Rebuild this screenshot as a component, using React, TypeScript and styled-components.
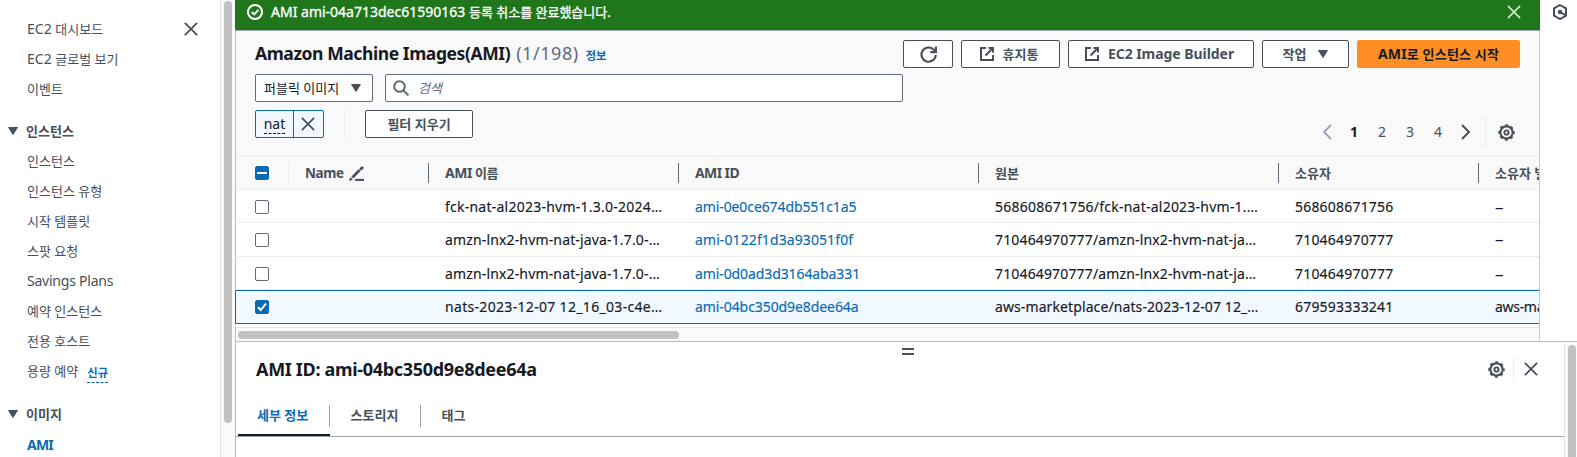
import React from "react";
import styled, { createGlobalStyle, css } from "styled-components";

const GlobalStyle = createGlobalStyle`
  *, *::before, *::after { box-sizing: border-box; }
  body {
    margin: 0;
    background: #fff;
    color: #16191f;
    font-family: "Noto Sans", "Noto Sans CJK KR", sans-serif;
    font-size: 14px;
    line-height: 20px;
    overflow: hidden;
  }
`;

const ink = "#474f5a";
const linkBlue = "#086ab4";
const rule = "#e9ebed";
const edge = "#b6bec0";

const Page = styled.div`
  display: flex;
  width: 1577px;
  height: 457px;
  overflow: hidden;
`;

const Text = styled.span<{ $ls?: number; $size?: number; $weight?: number }>`
  white-space: pre;
  letter-spacing: ${(p) => p.$ls ?? 0}px;
  ${(p) => p.$size && css`font-size: ${p.$size}px;`}
`;

const Ko = styled.span`
  font-size: 13px;
`;

/* Side navigation */
const Sidebar = styled.nav`
  width: 220px;
  padding-top: 14px;
  flex: none;
  color: ${ink};
`;

const NavRow = styled.div<{ $active?: boolean }>`
  display: flex;
  align-items: center;
  height: 30px;
  padding: 0 22px 0 27px;
  white-space: pre;
  ${(p) => p.$active && css`margin-top: 1px; color: ${linkBlue}; font-weight: 700;`}
  > svg { margin-left: auto; }
`;

const NavHeading = styled.div`
  display: flex;
  align-items: center;
  height: 30px;
  margin-top: 12px;
  padding-left: 8px;
  gap: 8px;
  font-size: 13px;
  font-weight: 700;
  & ~ & { margin-top: 13px; }
`;

const NewTag = styled.span`
  margin-left: 9px;
  margin-top: 4px;
  height: 19px;
  line-height: 17px;
  font-size: 11.3px;
  font-weight: 700;
  color: ${linkBlue};
  border-bottom: 1px dashed ${linkBlue};
`;

const SideScroll = styled.div`
  width: 15px;
  flex: none;
  border-left: 1px solid #e4e4e4;
  background: #fafafa;
  padding: 1px 3px;
`;

const Thumb = styled.div<{ $w: number; $h: number }>`
  width: ${(p) => p.$w}px;
  height: ${(p) => p.$h}px;
  border-radius: 4px;
  background: #c1c1c1;
`;

/* Main area */
const Main = styled.div`
  display: flex;
  flex-direction: column;
  width: 1342px;
`;

const Upper = styled.div`
  display: flex;
  height: 341px;
  flex: none;
`;

const Content = styled.div`
  width: 1305px;
  flex: none;
`;

const Panel = styled.div`
  width: 1305px;
  height: 310px;
  overflow: hidden;
  background: #f9f9f9;
  border-right: 1px solid #c3c9ce;
`;

const Tools = styled.div`
  height: 125px;
  padding: 9px 19px 0 19px;
  border-left: 1px solid ${edge};
`;

const Rail = styled.aside`
  flex: 1;
  padding: 4px 0 0 12px;
  color: ${ink};
`;

const Flash = styled.div`
  display: flex;
  align-items: center;
  height: 31px;
  padding: 0 19px 6px 12px;
  color: #fff;
  background: #20771b;
  border-bottom: 1px solid #9ba7b6;
  gap: 8px;
  -webkit-text-stroke: 0.3px #fff;
  > svg:last-child { margin-left: auto; opacity: 0.8; }
`;

const TitleBar = styled.div`
  display: flex;
  align-items: center;
  height: 28px;
`;

const Title = styled.h1`
  margin: 0;
  padding-bottom: 2px;
  font-size: 17.5px;
  font-weight: 700;
  white-space: pre;
`;

const Counter = styled.span`
  margin-left: 6px;
  padding-bottom: 2px;
  font-size: 18px;
  letter-spacing: 0.55px;
  color: #5f6b7a;
`;

const InfoLink = styled.span`
  margin: 3px 0 0 7px;
  font-size: 11.3px;
  font-weight: 700;
  color: ${linkBlue};
`;

const Actions = styled.div`
  display: flex;
  gap: 8px;
  margin-left: auto;
`;

const Button = styled.button<{ $w: number; $primary?: boolean; $external?: boolean; $gap?: number }>`
  display: flex;
  align-items: center;
  justify-content: center;
  gap: ${(p) => p.$gap ?? 8}px;
  width: ${(p) => p.$w}px;
  height: 28px;
  padding: 0 ${(p) => (p.$external ? 4 : 0)}px 0 0;
  border: 1px solid ${ink};
  border-radius: 2px;
  background: #fff;
  color: ${ink};
  font: 700 14px/20px "Noto Sans", "Noto Sans CJK KR", sans-serif;
  white-space: pre;
  ${(p) => p.$primary && css`
    background: #ff8f24;
    border-color: #ff8f24;
    color: #16191f;
  `}
`;

const FilterBar = styled.div`
  display: flex;
  gap: 12px;
  margin-top: 6px;
`;

const Select = styled.div`
  display: flex;
  align-items: center;
  justify-content: space-between;
  width: 118px;
  height: 28px;
  padding: 0 11px 0 8px;
  border: 1px solid #5f6b7a;
  border-radius: 2px;
  background: #fff;
  font-size: 13px;
`;

const Search = styled.div`
  display: flex;
  align-items: center;
  gap: 9px;
  width: 518px;
  height: 28px;
  padding-left: 7px;
  border: 1px solid #5f6b7a;
  border-radius: 2px;
  background: #fff;
  color: #5f6b7a;
  font-size: 13px;
  font-style: italic;
`;

const TokenBar = styled.div`
  display: flex;
  align-items: flex-start;
  margin-top: 8px;
`;

const Token = styled.div`
  display: flex;
  width: 69px;
  height: 28px;
  border: 1px solid ${linkBlue};
  border-radius: 2px;
  background: #f1f8ff;
`;

const TokenLabel = styled.div`
  display: flex;
  align-items: flex-start;
  justify-content: center;
  width: 38px;
  padding-top: 3px;
  border-right: 1px solid ${linkBlue};
  > span { border-bottom: 1px dashed #16191f; height: 20px; }
`;

const TokenClose = styled.div`
  display: flex;
  flex: 1;
  align-items: center;
  justify-content: center;
  padding-right: 2px;
  color: ${ink};
`;

const VLine = styled.div<{ $h: number; $ml: number; $mr: number }>`
  width: 1px;
  height: ${(p) => p.$h}px;
  margin: 0 ${(p) => p.$mr}px 0 ${(p) => p.$ml}px;
  background: ${rule};
`;

const Pager = styled.div`
  display: flex;
  align-items: center;
  height: 28px;
  margin: 8px 5px 0 auto;
  color: ${ink};
`;

const Pages = styled.div`
  display: flex;
  margin: 0 6px 0 5px;
`;

const PageNo = styled.span<{ $on?: boolean }>`
  width: 28px;
  text-align: center;
  ${(p) => p.$on && css`font-weight: 700; color: #16191f;`}
`;

/* Table */
const grid = css`
  display: grid;
  grid-template-columns: 53px 140px 250px 300px 300px 200px 250px;
  width: 1494px;
  border-left: 1px solid ${edge};
`;

const HeadRow = styled.div`
  ${grid}
  height: 34px;
  border-top: 1px solid ${rule};
  border-bottom: 1px solid ${rule};
  color: ${ink};
  font-weight: 700;
`;

const HeadCell = styled.div<{ $last?: boolean }>`
  display: flex;
  align-items: center;
  gap: 5px;
  height: 20px;
  margin-top: 6px;
  padding-left: 16px;
  white-space: pre;
  border-right: ${(p) => (p.$last ? "none" : "1px solid #5f6b7a")};
`;

const CheckCell = styled.div<{ $head?: boolean }>`
  display: flex;
  align-items: center;
  height: 20px;
  margin-top: ${(p) => (p.$head ? 6 : 0)}px;
  padding-left: 19px;
  ${(p) => p.$head && css`border-right: 1px solid ${rule};`}
`;

const Row = styled.div<{ $h: number; $drop?: boolean; $selected?: boolean }>`
  ${grid}
  align-items: center;
  height: ${(p) => p.$h}px;
  padding-top: ${(p) => (p.$drop ? 2 : 0)}px;
  background: #fff;
  border-bottom: 1px solid ${rule};
  ${(p) => p.$selected && css`
    background: #f1f8ff;
    border: 1px solid ${linkBlue};
  `}
`;

const Cell = styled.div<{ $link?: boolean }>`
  padding-left: 16px;
  white-space: pre;
  -webkit-text-stroke: 0.15px currentColor;
  ${(p) => p.$link && css`color: ${linkBlue};`}
`;

const Box = styled.span<{ $on?: boolean }>`
  display: flex;
  align-items: center;
  justify-content: center;
  width: 14px;
  height: 14px;
  border-radius: 2px;
  border: 1px solid ${(p) => (p.$on ? linkBlue : "#5f6b7a")};
  background: ${(p) => (p.$on ? linkBlue : "#fff")};
`;

const HScroll = styled.div`
  height: 17px;
  padding: 4px 2px 0;
  border-top: 3px solid #fff;
  border-left: 1px solid ${edge};
  background: #fafafa;
  box-shadow: inset 0 1px 0 #e4e4e4;
`;

/* Split panel */
const Split = styled.section`
  display: flex;
  flex: 1;
  border-top: 1px solid ${edge};
  border-left: 1px solid ${edge};
  background: #fff;
`;

const SplitBody = styled.div`
  display: flex;
  flex-direction: column;
  width: 1328px;
`;

const Handle = styled.div`
  display: flex;
  flex-direction: column;
  gap: 3px;
  width: 12px;
  margin: 6px 0 0 666px;
  > i { height: 2px; background: ${ink}; }
`;

const SplitHead = styled.div`
  display: flex;
  align-items: center;
  height: 24px;
  margin: 2px 26px 0 20px;
  color: ${ink};
`;

const SplitTitle = styled.h2`
  margin: 0 auto 0 0;
  color: #16191f;
  font-size: 18px;
  font-weight: 700;
  white-space: pre;
`;

const Tabs = styled.div`
  display: flex;
  height: 56px;
  padding: 24px 0 0 2px;
  border-bottom: 1px solid #9ba7a7;
`;

const Tab = styled.div<{ $w: number; $on?: boolean; $last?: boolean }>`
  width: ${(p) => p.$w}px;
  height: 31px;
  color: ${(p) => (p.$on ? linkBlue : ink)};
  font-size: 13px;
  font-weight: 700;
  border-bottom: ${(p) => (p.$on ? "2px solid #16191f" : "none")};
  > span {
    display: block;
    height: 22px;
    padding-left: ${(p) => (p.$on ? 19 : 20.5)}px;
    border-right: ${(p) => (p.$last ? "none" : "1px solid #9ba7a7")};
  }
`;

const SplitScroll = styled.div`
  flex: 1;
  padding: 3px 0 0 3px;
  border-left: 1px solid #e4e4e4;
  background: #fafafa;
  overflow: hidden;
`;

/* Icons on a 16-unit grid */
const Glyph = styled.svg`
  flex: none;
`;

type IconProps = { size?: number; color?: string; children: React.ReactNode };
const Icon = ({ size = 16, color = "currentColor", children }: IconProps) => (
  <Glyph width={size} height={size} viewBox="0 0 16 16" fill="none" stroke={color} strokeWidth="2">
    {children}
  </Glyph>
);
const Close = ({ size = 14 }: { size?: number }) => (
  <Icon size={size}><path d="M1 1l14 14M15 1L1 15" /></Icon>
);
const Caret = () => (
  <Glyph width="10" height="8" viewBox="0 0 10 8"><path d="M.6.5h8.800L5 7.500z" fill={ink} stroke={ink} strokeLinejoin="round" /></Glyph>
);
const External = () => (
  <Icon size={16}><path d="M7 2H2v12h12V9" /><path d="M9.500 2H14v4.500M13.500 2.500L6.500 9.500" /></Icon>
);
const Gear = () => (
  <Icon size={17}>
    <circle cx="8" cy="8" r="5.800" strokeWidth="2" />
    <circle cx="8" cy="8" r="7" strokeWidth="1.500" strokeDasharray="2.900 2.598" strokeDashoffset="1.450" />
    <circle cx="8" cy="8" r="2" strokeWidth="1.800" />
  </Icon>
);
const Pencil = () => (
  <Icon size={15}>
    <path d="M3.600 12.300L11.300 4.400" strokeWidth="3" />
    <path d="M12.700 3.100L14 1.800" strokeWidth="3" strokeLinecap="round" />
    <path d="M0 16l1.400-4.200 2.800 2.800z" fill="currentColor" stroke="none" />
    <path d="M6.500 14.800H16" strokeWidth="2.200" />
  </Icon>
);

const rows = [
  { h: 33, name: "fck-nat-al2023-hvm-1.3.0-2024…", nameLs: 0.24, id: "ami-0e0ce674db551c1a5", idLs: -0.1, src: "568608671756/fck-nat-al2023-hvm-1.…", srcLs: 0.23, owner: "568608671756", drop: true },
  { h: 34, name: "amzn-lnx2-hvm-nat-java-1.7.0-…", nameLs: 0.15, id: "ami-0122f1d3a93051f0f", idLs: 0.1, src: "710464970777/amzn-lnx2-hvm-nat-ja…", srcLs: 0.15, owner: "710464970777" },
  { h: 33, name: "amzn-lnx2-hvm-nat-java-1.7.0-…", nameLs: 0.15, id: "ami-0d0ad3d3164aba331", idLs: -0.1, src: "710464970777/amzn-lnx2-hvm-nat-ja…", srcLs: 0.15, owner: "710464970777", drop: true },
  { h: 34, name: "nats-2023-12-07 12_16_03-c4e…", nameLs: 0.32, id: "ami-04bc350d9e8dee64a", idLs: -0.08, src: "aws-marketplace/nats-2023-12-07 12_…", srcLs: 0.1, owner: "679593333241", alias: "aws-marketplace", selected: true },
];

export default function App() {
  return (
    <Page>
      <GlobalStyle />
      <Sidebar>
        <NavRow><span>EC2 <Ko>대시보드</Ko></span><Close /></NavRow>
        <NavRow>EC2 <Ko>글로벌 보기</Ko></NavRow>
        <NavRow><Ko>이벤트</Ko></NavRow>
        <NavHeading><Caret />인스턴스</NavHeading>
        <NavRow><Ko>인스턴스</Ko></NavRow>
        <NavRow><Ko>인스턴스 유형</Ko></NavRow>
        <NavRow><Ko>시작 템플릿</Ko></NavRow>
        <NavRow><Ko>스팟 요청</Ko></NavRow>
        <NavRow><Text $ls={-0.23}>Savings Plans</Text></NavRow>
        <NavRow><Ko>예약 인스턴스</Ko></NavRow>
        <NavRow><Ko>전용 호스트</Ko></NavRow>
        <NavRow><Ko>용량 예약</Ko><NewTag>신규</NewTag></NavRow>
        <NavHeading><Caret />이미지</NavHeading>
        <NavRow $active><Text $ls={-0.8}>AMI</Text></NavRow>
      </Sidebar>
      <SideScroll><Thumb $w={8} $h={422} /></SideScroll>
      <Main>
        <Upper>
          <Content>
            <Flash>
              <Icon size={16}><circle cx="8" cy="8" r="7" /><path d="M4.800 8l2.400 2.400 4.200-4.600" /></Icon>
              <Text>AMI ami-04a713dec61590163 <Ko>등록 취소를 완료했습니다.</Ko></Text>
              <Close size={14} />
            </Flash>
            <Panel>
              <Tools>
                <TitleBar>
                  <Title><Text $ls={-0.42}>Amazon Machine Images(AMI)</Text></Title>
                  <Counter>(1/198)</Counter>
                  <InfoLink>정보</InfoLink>
                  <Actions>
                    <Button $w={50}>
                      <Icon size={17}><path d="M14.800 8.500a6.700 6.700 0 1 1-2-5.200L15 5.400" /><path d="M15 .5v5.300H9.700" /></Icon>
                    </Button>
                    <Button $w={99} $external><External /><Ko>휴지통</Ko></Button>
                    <Button $w={186} $external><External /><Text $ls={-0.05}>EC2 Image Builder</Text></Button>
                    <Button $w={87} $gap={12}><Ko>작업</Ko><Caret /></Button>
                    <Button $w={163} $primary><Text $ls={0.2}>AMI<Ko>로 인스턴스 시작</Ko></Text></Button>
                  </Actions>
                </TitleBar>
                <FilterBar>
                  <Select>퍼블릭 이미지<Caret /></Select>
                  <Search>
                    <Icon size={16}><circle cx="6.500" cy="6.500" r="5.300" /><path d="M10.400 10.400l5 5" /></Icon>
                    검색
                  </Search>
                </FilterBar>
                <TokenBar>
                  <Token>
                    <TokenLabel><span>nat</span></TokenLabel>
                    <TokenClose><Close size={14} /></TokenClose>
                  </Token>
                  <VLine $h={28} $ml={20} $mr={20} />
                  <Button $w={108}><Ko>필터 지우기</Ko></Button>
                  <Pager>
                    <Icon size={16} color="#9ba7b6"><path d="M12 1L5 8l7 7" /></Icon>
                    <Pages>
                      <PageNo $on>1</PageNo><PageNo>2</PageNo><PageNo>3</PageNo><PageNo>4</PageNo>
                    </Pages>
                    <Icon size={16}><path d="M4 1l7 7-7 7" /></Icon>
                    <VLine $h={28} $ml={11} $mr={12} />
                    <Gear />
                  </Pager>
                </TokenBar>
              </Tools>
              <HeadRow>
                <CheckCell $head>
                  <Box $on><Glyph width="10" height="2"><path d="M0 1h10" stroke="#fff" strokeWidth="2" /></Glyph></Box>
                </CheckCell>
                <HeadCell><Text $ls={-0.4} $size={13.500}>Name</Text><Pencil /></HeadCell>
                <HeadCell><Text $ls={-0.5}>AMI <Ko>이름</Ko></Text></HeadCell>
                <HeadCell><Text $ls={-0.6}>AMI ID</Text></HeadCell>
                <HeadCell><Ko>원본</Ko></HeadCell>
                <HeadCell><Ko>소유자</Ko></HeadCell>
                <HeadCell $last><Ko>소유자 별칭</Ko></HeadCell>
              </HeadRow>
              {rows.map((r) => (
                <Row key={r.id} $h={r.h} $drop={r.drop} $selected={r.selected}>
                  <CheckCell>
                    <Box $on={r.selected}>
                      {r.selected && <Glyph width="10" height="10" viewBox="0 0 10 10"><path d="M1 5.200l2.800 2.800L9 1.500" fill="none" stroke="#fff" strokeWidth="2" /></Glyph>}
                    </Box>
                  </CheckCell>
                  <Cell />
                  <Cell><Text $ls={r.nameLs}>{r.name}</Text></Cell>
                  <Cell $link><Text $ls={r.idLs}>{r.id}</Text></Cell>
                  <Cell><Text $ls={r.srcLs}>{r.src}</Text></Cell>
                  <Cell><Text $ls={0.2}>{r.owner}</Text></Cell>
                  <Cell>{r.alias ? <Text $ls={-0.3}>{r.alias}</Text> : <Text $size={17}>–</Text>}</Cell>
                </Row>
              ))}
              <HScroll><Thumb $w={441} $h={8} /></HScroll>
            </Panel>
          </Content>
          <Rail>
            <Icon size={16}><path d="M8 1l6 3.400v7.200L8 15l-6-3.400V4.400z" /><circle cx="8" cy="8" r="2.200" fill="currentColor" stroke="none" /><path d="M8 8l5 2.900" /></Icon>
          </Rail>
        </Upper>
        <Split>
          <SplitBody>
            <Handle><i /><i /></Handle>
            <SplitHead>
              <SplitTitle><Text $ls={-0.31}>AMI ID: ami-04bc350d9e8dee64a</Text></SplitTitle>
              <Gear />
              <VLine $h={24} $ml={8} $mr={10} />
              <Close size={14} />
            </SplitHead>
            <Tabs>
              <Tab $w={92} $on><span>세부 정보</span></Tab>
              <Tab $w={91}><span>스토리지</span></Tab>
              <Tab $w={91} $last><span>태그</span></Tab>
            </Tabs>
          </SplitBody>
          <SplitScroll><Thumb $w={8} $h={200} /></SplitScroll>
        </Split>
      </Main>
    </Page>
  );
}
